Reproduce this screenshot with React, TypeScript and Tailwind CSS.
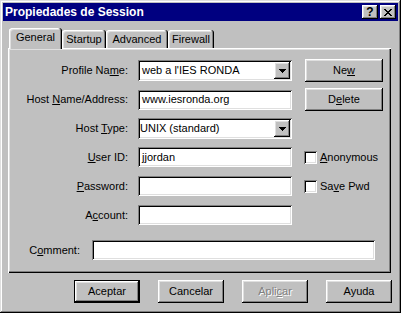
import React from "react";

const raised =
  "shadow-[inset_-1px_-1px_#000,inset_1px_1px_#fff,inset_-2px_-2px_#808080,inset_2px_2px_#dfdfdf]";
const raisedDefault =
  "shadow-[inset_0_0_0_1px_#000,inset_-2px_-2px_#000,inset_2px_2px_#fff,inset_-3px_-3px_#808080,inset_3px_3px_#dfdfdf]";
const sunken =
  "shadow-[inset_1px_1px_#808080,inset_-1px_-1px_#fff,inset_2px_2px_#000,inset_-2px_-2px_#dfdfdf]";

function Arrow() {
  return (
    <svg width="7" height="4" viewBox="0 0 7 4" shapeRendering="crispEdges">
      <rect x="0" y="0" width="7" height="1" fill="#000" />
      <rect x="1" y="1" width="5" height="1" fill="#000" />
      <rect x="2" y="2" width="3" height="1" fill="#000" />
      <rect x="3" y="3" width="1" height="1" fill="#000" />
    </svg>
  );
}

function Combo({ text, pad }: { text: string; pad: string }) {
  return (
    <div className={"w-[154px] h-[21px] bg-white flex items-center pr-[2px] " + sunken}>
      <span className={"flex-1 whitespace-nowrap " + pad}>{text}</span>
      <div className={"w-[16px] h-[17px] bg-[#c0c0c0] flex items-center justify-center " + raised}>
        <Arrow />
      </div>
    </div>
  );
}

function Field({ text, w }: { text?: string; w: string }) {
  return (
    <div className={"h-[20px] bg-white flex items-center pl-[4px] " + w + " " + sunken}>
      <span className="whitespace-nowrap">{text}</span>
    </div>
  );
}

function Check({ children }: { children: React.ReactNode }) {
  return (
    <div className="flex items-center ml-[12px]">
      <div className={"w-[13px] h-[13px] bg-white " + sunken} />
      <span className="ml-[3px]">{children}</span>
    </div>
  );
}

function Label({ children, w }: { children: React.ReactNode; w: string }) {
  return <div className={"text-right whitespace-nowrap " + w}>{children}</div>;
}

export default function App() {
  return (
    <div
      className={
        "w-[401px] h-[313px] bg-[#c0c0c0] p-[3px] flex flex-col font-['Liberation_Sans',Arial,sans-serif] text-[11px] leading-[13px] text-black shadow-[inset_-1px_-1px_#000,inset_1px_1px_#dfdfdf,inset_-2px_-2px_#808080,inset_2px_2px_#fff]"
      }
    >
      {/* Title bar */}
      <div className="h-[18px] shrink-0 bg-[#000080] flex items-center justify-between pl-[2px] pr-[2px]">
        <span className="text-white font-bold text-[12px] leading-[14px] whitespace-nowrap">
          Propiedades de Session
        </span>
        <div className="flex gap-[2px]">
          <div
            className={
              "w-[16px] h-[14px] bg-[#c0c0c0] flex items-center justify-center font-bold text-[12px] leading-[12px] " +
              raised
            }
          >
            ?
          </div>
          <div className={"w-[16px] h-[14px] bg-[#c0c0c0] flex items-center justify-center " + raised}>
            <svg width="8" height="7" viewBox="0 0 8 7" shapeRendering="crispEdges">
              <rect x="0" y="0" width="2" height="1" fill="#000" />
              <rect x="6" y="0" width="2" height="1" fill="#000" />
              <rect x="1" y="1" width="2" height="1" fill="#000" />
              <rect x="5" y="1" width="2" height="1" fill="#000" />
              <rect x="2" y="2" width="4" height="1" fill="#000" />
              <rect x="3" y="3" width="2" height="1" fill="#000" />
              <rect x="2" y="4" width="4" height="1" fill="#000" />
              <rect x="1" y="5" width="2" height="1" fill="#000" />
              <rect x="5" y="5" width="2" height="1" fill="#000" />
              <rect x="0" y="6" width="2" height="1" fill="#000" />
              <rect x="6" y="6" width="2" height="1" fill="#000" />
            </svg>
          </div>
        </div>
      </div>

      {/* Tabs + panel */}
      <div className="mt-[7px] ml-[5px] w-[383px] flex flex-col shrink-0">
        <div className="flex items-end h-[20px] pl-[1px]">
          <div
            className={
              "relative z-10 w-[53px] h-[21px] -mb-[1px] bg-[#c0c0c0] rounded-t-[3px] text-center pt-[3px] shadow-[inset_-1px_0_#000,inset_1px_1px_#fff,inset_-2px_0_#808080,inset_2px_2px_#dfdfdf]"
            }
          >
            General
          </div>
          <div className="w-[44px] h-[18px] rounded-t-[3px] text-center pt-[3px] shadow-[inset_-1px_0_#000,inset_1px_1px_#fff,inset_-2px_0_#808080,inset_2px_2px_#dfdfdf]">
            Startup
          </div>
          <div className="w-[62px] h-[18px] rounded-t-[3px] text-center pt-[3px] shadow-[inset_-1px_0_#000,inset_1px_1px_#fff,inset_-2px_0_#808080,inset_2px_2px_#dfdfdf]">
            Advanced
          </div>
          <div className="w-[46px] h-[18px] rounded-t-[3px] text-center pt-[3px] shadow-[inset_-1px_0_#000,inset_1px_1px_#fff,inset_-2px_0_#808080,inset_2px_2px_#dfdfdf]">
            Firewall
          </div>
        </div>
        <div className="h-[225px] pt-[11px] flex flex-col shadow-[inset_1px_1px_#fff,inset_-1px_-1px_#000,inset_-2px_-2px_#808080,inset_2px_2px_#dfdfdf]">
          {/* Row 1 */}
          <div className="flex items-center h-[23px]">
            <Label w="w-[120px]">
              Profile Na<u>m</u>e:
            </Label>
            <div className="ml-[10px]">
              <Combo text="web a l'IES RONDA" pad="pl-[4px]" />
            </div>
            <div
              className={"ml-[13px] w-[78px] h-[23px] flex items-center justify-center " + raised}
            >
              Ne<u>w</u>
            </div>
          </div>
          {/* Row 2 */}
          <div className="flex items-center h-[23px] mt-[6px]">
            <Label w="w-[120px]">
              Host <u>N</u>ame/Address:
            </Label>
            <div className="ml-[10px]">
              <Field text="www.iesronda.org" w="w-[154px]" />
            </div>
            <div
              className={"ml-[13px] w-[78px] h-[23px] flex items-center justify-center " + raised}
            >
              D<u>e</u>lete
            </div>
          </div>
          {/* Row 3 */}
          <div className="flex items-center h-[21px] mt-[7px]">
            <Label w="w-[120px]">
              Host <u>T</u>ype:
            </Label>
            <div className="ml-[10px]">
              <Combo text="UNIX (standard)" pad="pl-[2px]" />
            </div>
          </div>
          {/* Row 4 */}
          <div className="flex items-center h-[20px] mt-[8px]">
            <Label w="w-[120px]">
              <u>U</u>ser ID:
            </Label>
            <div className="ml-[10px]">
              <Field text="jjordan" w="w-[154px]" />
            </div>
            <Check>
              <u>A</u>nonymous
            </Check>
          </div>
          {/* Row 5 */}
          <div className="flex items-center h-[20px] mt-[9px]">
            <Label w="w-[120px]">
              <u>P</u>assword:
            </Label>
            <div className="ml-[10px]">
              <Field w="w-[154px]" />
            </div>
            <Check>
              Sa<u>v</u>e Pwd
            </Check>
          </div>
          {/* Row 6 */}
          <div className="flex items-center h-[20px] mt-[9px]">
            <Label w="w-[120px]">
              A<u>c</u>count:
            </Label>
            <div className="ml-[10px]">
              <Field w="w-[154px]" />
            </div>
          </div>
          {/* Comment */}
          <div className="flex items-center h-[20px] mt-[15px]">
            <Label w="w-[72px]">
              C<u>o</u>mment:
            </Label>
            <div className="ml-[12px]">
              <Field w="w-[283px]" />
            </div>
          </div>
        </div>
      </div>

      {/* Bottom buttons */}
      <div className="mt-[7px] flex justify-end gap-[18px] pr-[6px]">
        <div className={"w-[66px] h-[23px] flex items-center justify-center " + raisedDefault}>
          Aceptar
        </div>
        <div className={"w-[66px] h-[23px] flex items-center justify-center " + raised}>
          Cancelar
        </div>
        <div
          className={
            "w-[66px] h-[23px] flex items-center justify-center text-[#808080] [text-shadow:1px_1px_#fff] " +
            raised
          }
        >
          Apli<u>c</u>ar
        </div>
        <div className={"w-[66px] h-[23px] flex items-center justify-center " + raised}>
          Ayuda
        </div>
      </div>
    </div>
  );
}
